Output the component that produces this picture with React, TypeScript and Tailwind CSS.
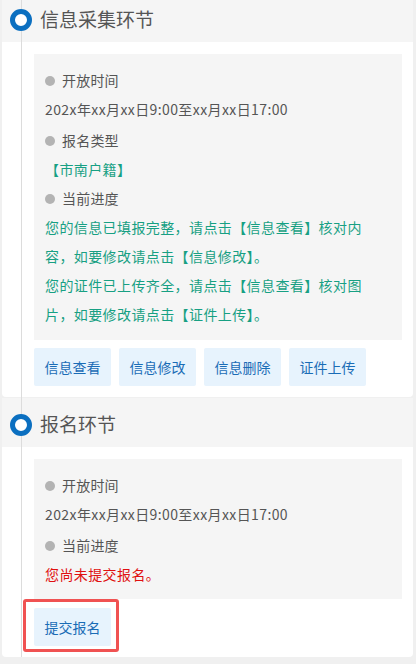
import React from "react";

const font = {
  fontFamily: '"Noto Sans CJK SC", "Noto Sans", sans-serif',
};

function Label({ children, first }: { children: React.ReactNode; first?: boolean }) {
  return (
    <div className={`flex items-center h-[29px] text-[#555] ${first ? "" : "mt-[2px]"}`}>
      <span className="inline-block w-[10px] h-[10px] rounded-full bg-[#b3b3b3] mr-[7px]" />
      <span className="tracking-[0.2px]">{children}</span>
    </div>
  );
}

function Line({ children, color = "text-[#555]" }: { children: React.ReactNode; color?: string }) {
  return (
    <div className={`h-[29px] leading-[29px] whitespace-nowrap tracking-[0.4px] ${color}`}>
      {children}
    </div>
  );
}

function Header({ title }: { title: string }) {
  return (
    <div className="flex items-center h-[49px] pt-[4px] bg-[#f5f5f5]">
      <span className="relative z-[2] ml-[8px] w-[22px] h-[22px] rounded-full border-[5px] border-[#0b6fc0] bg-white" />
      <span className="ml-[8px] text-[19px] text-[#555]">{title}</span>
    </div>
  );
}

function Btn({ children }: { children: React.ReactNode }) {
  return (
    <button className="w-[77px] h-[38px] rounded-[2px] bg-[#e7f3fd] text-[14px] text-[#1a6cb6]">
      {children}
    </button>
  );
}

export default function App() {
  const green = "text-[#17a083]";
  return (
    <div className="min-h-[664px] bg-[#f0f0f0] overflow-hidden" style={font}>
      <div className="relative ml-[2px] mr-[3px] -mt-[7px]">
        {/* 时间轴竖线 */}
        <div className="absolute z-[1] left-[19px] top-0 bottom-0 w-px bg-[#dcdcdc]" />

        {/* 信息采集环节 */}
        <Header title="信息采集环节" />
        <div className="bg-white rounded-b-[4px] pl-[32px] pr-[11px] pt-[12px] pb-[11px]">
          <div className="bg-[#f5f5f5] pl-[11px] pt-[12px] pb-[11px] text-[14px]">
            <Label first>开放时间</Label>
            <Line>202x年xx月xx日9:00至xx月xx日17:00</Line>
            <Label>报名类型</Label>
            <Line color={green}>【市南户籍】</Line>
            <Label first>当前进度</Label>
            <Line color={green}>您的信息已填报完整，请点击【信息查看】核对内</Line>
            <Line color={green}>容，如要修改请点击【信息修改】。</Line>
            <Line color={green}>您的证件已上传齐全，请点击【信息查看】核对图</Line>
            <Line color={green}>片，如要修改请点击【证件上传】。</Line>
          </div>
          <div className="flex gap-[8px] mt-[8px]">
            <Btn>信息查看</Btn>
            <Btn>信息修改</Btn>
            <Btn>信息删除</Btn>
            <Btn>证件上传</Btn>
          </div>
        </div>

        {/* 报名环节 */}
        <div className="mt-px">
          <Header title="报名环节" />
        </div>
        <div className="bg-white rounded-b-[4px] pl-[32px] pr-[11px] pt-[12px] pb-[11px]">
          <div className="bg-[#f5f5f5] pl-[11px] pt-[12px] pb-[10px] text-[14px]">
            <Label first>开放时间</Label>
            <Line>202x年xx月xx日9:00至xx月xx日17:00</Line>
            <Label>当前进度</Label>
            <Line color="text-[#e01010]">您尚未提交报名。</Line>
          </div>
          <div className="flex mt-[9px]">
            <div className="relative">
              <Btn>提交报名</Btn>
              <span className="absolute -left-[11px] -top-[9px] -right-[8px] -bottom-[6px] border-[3px] border-[#f05252] rounded-[3px] pointer-events-none" />
            </div>
          </div>
        </div>
      </div>
    </div>
  );
}
